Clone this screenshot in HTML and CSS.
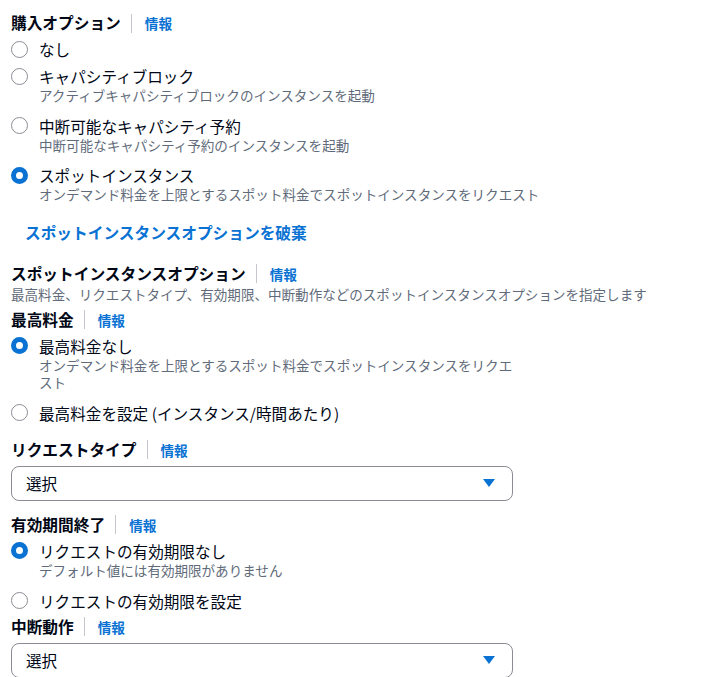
FILE: index.html
```html
<!DOCTYPE html>
<html lang="ja">
<head>
<meta charset="utf-8">
<link rel="stylesheet" href="styles.css">
</head>
<body>
<div class="page">
  <div class="label-row">
    <span class="label">購入オプション</span><span class="sep"></span><a class="info">情報</a>
  </div>
  <div class="radios wide">
    <div class="radio"><span class="circle"></span><div class="rtext"><div class="rlabel">なし</div></div></div>
    <div class="radio desc-item"><span class="circle"></span><div class="rtext"><div class="rlabel">キャパシティブロック</div><div class="desc">アクティブキャパシティブロックのインスタンスを起動</div></div></div>
    <div class="radio desc-item"><span class="circle"></span><div class="rtext"><div class="rlabel">中断可能なキャパシティ予約</div><div class="desc">中断可能なキャパシティ予約のインスタンスを起動</div></div></div>
    <div class="radio"><span class="circle checked"></span><div class="rtext"><div class="rlabel">スポットインスタンス</div><div class="desc">オンデマンド料金を上限とするスポット料金でスポットインスタンスをリクエスト</div></div></div>
  </div>

  <a class="dismiss">スポットインスタンスオプションを破棄</a>

  <div class="label-row m-spot">
    <span class="label">スポットインスタンスオプション</span><span class="sep"></span><a class="info">情報</a>
  </div>
  <div class="section-desc">最高料金、リクエストタイプ、有効期限、中断動作などのスポットインスタンスオプションを指定します</div>

  <div class="label-row m-price">
    <span class="label">最高料金</span><span class="sep"></span><a class="info">情報</a>
  </div>
  <div class="radios narrow">
    <div class="radio desc-item"><span class="circle checked"></span><div class="rtext"><div class="rlabel">最高料金なし</div><div class="desc">オンデマンド料金を上限とするスポット料金でスポットインスタンスをリクエスト</div></div></div>
    <div class="radio"><span class="circle"></span><div class="rtext"><div class="rlabel">最高料金を設定 (インスタンス/時間あたり)</div></div></div>
  </div>

  <div class="label-row m-after-radios">
    <span class="label">リクエストタイプ</span><span class="sep"></span><a class="info">情報</a>
  </div>
  <div class="select"><span>選択</span><span class="caret"></span></div>

  <div class="label-row m-after-select">
    <span class="label">有効期間終了</span><span class="sep"></span><a class="info">情報</a>
  </div>
  <div class="radios narrow">
    <div class="radio desc-item"><span class="circle checked"></span><div class="rtext"><div class="rlabel">リクエストの有効期限なし</div><div class="desc">デフォルト値には有効期限がありません</div></div></div>
    <div class="radio"><span class="circle"></span><div class="rtext"><div class="rlabel">リクエストの有効期限を設定</div></div></div>
  </div>

  <div class="label-row m-tight">
    <span class="label">中断動作</span><span class="sep"></span><a class="info">情報</a>
  </div>
  <div class="select"><span>選択</span><span class="caret"></span></div>
</div>
</body>
</html>
```

FILE: styles.css
```css
html, body {
  margin: 0;
  padding: 0;
  background: #ffffff;
}
body {
  font-family: "Noto Sans CJK JP", "Noto Sans", sans-serif;
  color: #000716;
  font-size: 15.6px;
  line-height: 22px;
}
.page {
  padding: 12px 0 0 11px;
  width: 502px;
}
.label-row {
  display: flex;
  align-items: center;
  height: 22px;
}
.label {
  font-weight: 700;
  font-size: 15.7px;
  color: #000716;
}
.sep {
  width: 1px;
  height: 19px;
  background: #c6c6cd;
  margin: 0 13px 0 10px;
}
.info {
  font-weight: 700;
  font-size: 13.6px;
  color: #0972d3;
}
.radios {
  display: flex;
  flex-direction: column;
  gap: 5px;
  margin-top: 4px;
}
.radios.wide {
  width: 700px;
}
.radios.narrow {
  width: 506px;
}
.radio {
  display: flex;
  align-items: flex-start;
}
.radio.desc-item {
  padding-bottom: 5px;
}
.circle {
  flex: none;
  box-sizing: border-box;
  width: 17px;
  height: 17px;
  border-radius: 50%;
  border: 1.8px solid #8c8c94;
  background: #fff;
  margin-top: 2.5px;
  margin-right: 11px;
}
.circle.checked {
  border: 5.5px solid #0972d3;
  background: #fff;
}
.rtext {
  flex: 1;
  min-width: 0;
}
.rlabel {
  font-size: 15.6px;
  line-height: 22px;
}
.desc {
  font-size: 13.55px;
  line-height: 17.6px;
  color: #5f6b7a;
}
.dismiss {
  display: block;
  margin-top: 18px;
  padding-left: 14px;
  font-weight: 700;
  font-size: 15.7px;
  line-height: 22px;
  color: #0972d3;
}
.m-spot {
  margin-top: 19px;
}
.section-desc {
  font-size: 13.55px;
  line-height: 18px;
  color: #5f6b7a;
  white-space: nowrap;
}
.m-price {
  margin-top: 6px;
}
.m-after-radios {
  margin-top: 15px;
}
.m-after-select {
  margin-top: 13px;
}
.m-tight {
  margin-top: 4px;
}
.select {
  box-sizing: border-box;
  margin-top: 5px;
  width: 502px;
  height: 35px;
  border: 1px solid #8c8c94;
  border-radius: 8px;
  display: flex;
  align-items: center;
  justify-content: space-between;
  padding: 0 17px 0 14px;
  font-size: 15.6px;
}
.caret {
  width: 0;
  height: 0;
  border-left: 6px solid transparent;
  border-right: 6px solid transparent;
  border-top: 8px solid #0972d3;
}
```
